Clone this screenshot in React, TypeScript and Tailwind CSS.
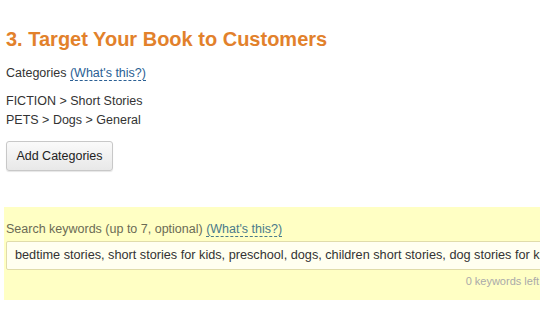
export default function App() {
  return (
    <div className="w-[540px] h-[310px] overflow-hidden bg-white text-[#333] font-['Liberation_Sans',Arial,sans-serif]">
      <div className="pl-[6px] pt-[27px]">
        <h2 className="text-[20px] leading-[24px] font-bold text-[#e2812b]">3. Target Your Book to Customers</h2>
        <p className="mt-[14px] text-[12.5px] leading-[16px]">
          Categories{" "}
          <span className="text-[#2a5f94] border-b border-dashed border-[#2a5f94]">(What's this?)</span>
        </p>
        <div className="mt-[11px] text-[12.5px] leading-[19px]">
          <p>FICTION &gt; Short Stories</p>
          <p>PETS &gt; Dogs &gt; General</p>
        </div>
        <button className="mt-[11px] h-[30px] w-[107px] rounded-[3px] border border-[#c8c8c8] bg-gradient-to-b from-[#fafafa] to-[#e8e8e8] text-[12.5px] text-[#222] shadow-[0_1px_1px_rgba(0,0,0,0.1)]">
          Add Categories
        </button>
      </div>
      <div className="ml-[4px] mt-[36px] h-[93px] bg-[#ffffc4] pl-[2px] pt-[14px]">
        <p className="text-[12.5px] leading-[16px] text-[#6b6b55]">
          Search keywords (up to 7, optional){" "}
          <span className="text-[#4a7a8a] border-b border-dashed border-[#4a7a8a]">(What's this?)</span>
        </p>
        <div className="mt-[4px] h-[29px] w-[560px] flex items-center rounded-[2px] border border-[#e0dcaa] bg-[#fffff0] pl-[8px] text-[12.7px] text-[#333] whitespace-nowrap overflow-hidden">
          bedtime stories, short stories for kids, preschool, dogs, children short stories, dog stories for kids
        </div>
        <div className="flex justify-end mt-[4px] mr-[1px] text-[11px] leading-[14px] text-[#aaa] whitespace-nowrap">
          0 keywords left
        </div>
      </div>
    </div>
  );
}
